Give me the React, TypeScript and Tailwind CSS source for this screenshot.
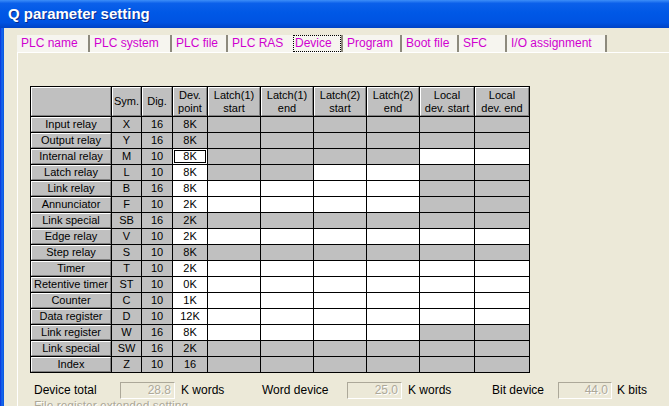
import React from "react";

type Row = {
  name: string;
  sym: string;
  dig: string;
  dev: string;
  devW: boolean;
  l1W: boolean;
  l2W: boolean;
  locW: boolean;
  focus?: boolean;
};

const rows: Row[] = [
  { name: "Input relay", sym: "X", dig: "16", dev: "8K", devW: false, l1W: false, l2W: false, locW: false },
  { name: "Output relay", sym: "Y", dig: "16", dev: "8K", devW: false, l1W: false, l2W: false, locW: false },
  { name: "Internal relay", sym: "M", dig: "10", dev: "8K", devW: true, l1W: false, l2W: false, locW: true, focus: true },
  { name: "Latch relay", sym: "L", dig: "10", dev: "8K", devW: true, l1W: false, l2W: true, locW: false },
  { name: "Link relay", sym: "B", dig: "16", dev: "8K", devW: true, l1W: true, l2W: true, locW: false },
  { name: "Annunciator", sym: "F", dig: "10", dev: "2K", devW: true, l1W: true, l2W: true, locW: false },
  { name: "Link special", sym: "SB", dig: "16", dev: "2K", devW: false, l1W: false, l2W: false, locW: false },
  { name: "Edge relay", sym: "V", dig: "10", dev: "2K", devW: true, l1W: true, l2W: true, locW: true },
  { name: "Step relay", sym: "S", dig: "10", dev: "8K", devW: false, l1W: false, l2W: false, locW: false },
  { name: "Timer", sym: "T", dig: "10", dev: "2K", devW: true, l1W: true, l2W: true, locW: true },
  { name: "Retentive timer", sym: "ST", dig: "10", dev: "0K", devW: true, l1W: true, l2W: true, locW: true },
  { name: "Counter", sym: "C", dig: "10", dev: "1K", devW: true, l1W: true, l2W: true, locW: true },
  { name: "Data register", sym: "D", dig: "10", dev: "12K", devW: true, l1W: true, l2W: true, locW: true },
  { name: "Link register", sym: "W", dig: "16", dev: "8K", devW: true, l1W: true, l2W: true, locW: false },
  { name: "Link special", sym: "SW", dig: "16", dev: "2K", devW: false, l1W: false, l2W: false, locW: false },
  { name: "Index", sym: "Z", dig: "10", dev: "16", devW: false, l1W: false, l2W: false, locW: false },
];

const tabs = [
  { label: "PLC name", w: "w-[73px]", sep: true },
  { label: "PLC system", w: "w-[82px]", sep: true },
  { label: "PLC file", w: "w-[56px]", sep: true },
  { label: "PLC RAS", w: "w-[65px]", sep: false },
  { label: "Device", w: "w-[50px]", sep: true, sel: true },
  { label: "Program", w: "w-[59px]", sep: true },
  { label: "Boot file", w: "w-[57px]", sep: true },
  { label: "SFC", w: "w-[48px]", sep: true },
  { label: "I/O assignment", w: "w-[100px]", sep: true },
];

const headers = [
  ["", ""],
  ["Sym.", ""],
  ["Dig.", ""],
  ["Dev.", "point"],
  ["Latch(1)", "start"],
  ["Latch(1)", "end"],
  ["Latch(2)", "start"],
  ["Latch(2)", "end"],
  ["Local", "dev. start"],
  ["Local", "dev. end"],
];

const raised =
  "bg-[#c0c0c0] border-t border-l border-t-white border-l-white border-b border-r border-b-[#808080] border-r-[#808080]";

function Cell({ white, children, focus }: { white: boolean; children?: React.ReactNode; focus?: boolean }) {
  return (
    <div
      className={
        (white ? "bg-white " : "bg-[#c0c0c0] ") +
        "flex items-center justify-center text-[11px] leading-[15px] text-black " +
        (focus ? "shadow-[inset_0_0_0_1px_#ffffff,inset_0_0_0_2px_#000000]" : "")
      }
    >
      {children}
    </div>
  );
}

function Field({ value, w }: { value: string; w: string }) {
  return (
    <div
      className={
        w +
        " h-[17px] border-t border-l border-t-[#aca899] border-l-[#aca899] border-b border-r border-b-white border-r-white flex items-center justify-end pr-[3px] text-[12px] leading-[15px] text-[#aca899] [text-shadow:1px_1px_0_#ffffff]"
      }
    >
      {value}
    </div>
  );
}

export default function App() {
  return (
    <div className="w-[669px] h-[406px] overflow-hidden bg-[#ece9d8] font-['Liberation_Sans',Arial,sans-serif] text-black">
      <div className="h-[28px] flex items-center bg-[linear-gradient(to_bottom,#3d8ef8_0%,#0b60ea_12%,#0058e6_45%,#0053e2_80%,#0043c6_100%)]">
        <span className="pl-[8px] text-[15px] font-bold text-white leading-[18px] [text-shadow:1px_1px_0_#0a2a8a]">
          Q parameter setting
        </span>
      </div>
      <div className="flex h-[378px]">
        <div className="w-[4px] bg-[linear-gradient(to_right,#0831d9,#166aee,#0855dd)]" />
        <div className="flex-1 pl-[13px] pt-[7px]">
          <div className="flex h-[17px]">
            {tabs.map((t) => (
              <div
                key={t.label}
                className={
                  t.w +
                  " h-[17px] bg-[#f6f5ef] text-[12px] leading-[16px] text-[#d000d0] whitespace-nowrap " +
                  (t.sep ? "border-r-2 border-r-[#8d8a7d] " : "") +
                  (t.sel ? "" : "pl-[4px]")
                }
              >
                {t.sel ? (
                  <span className="block w-[48px] h-[17px] border border-dotted border-black pl-[1px] leading-[14px]">
                    {t.label}
                  </span>
                ) : (
                  t.label
                )}
              </div>
            ))}
          </div>
          <div className="border-t border-l border-white h-[400px] pl-[12px] pt-[33px]">
            <div className="grid w-fit gap-px bg-black border border-black grid-cols-[80px_29px_30px_34px_52px_52px_52px_52px_54px_54px] grid-rows-[29px_repeat(16,15px)]">
              {headers.map((h, i) => (
                <div
                  key={"h" + i}
                  className={raised + " flex flex-col items-center justify-center text-[11px] leading-[13px]"}
                >
                  {h[0] && <span>{h[0]}</span>}
                  {h[1] && <span>{h[1]}</span>}
                </div>
              ))}
              {rows.map((r, i) => (
                <React.Fragment key={"r" + i}>
                  <div className={raised + " flex items-end justify-center text-[11px] leading-[14px]"}>
                    {r.name}
                  </div>
                  <Cell white={false}>{r.sym}</Cell>
                  <Cell white={false}>{r.dig}</Cell>
                  <Cell white={r.devW} focus={r.focus}>
                    {r.dev}
                  </Cell>
                  <Cell white={r.l1W} />
                  <Cell white={r.l1W} />
                  <Cell white={r.l2W} />
                  <Cell white={r.l2W} />
                  <Cell white={r.locW} />
                  <Cell white={r.locW} />
                </React.Fragment>
              ))}
            </div>
            <div className="flex items-center h-[17px] mt-[9px] pl-[4px] text-[12px] leading-[15px] whitespace-nowrap">
              <span className="w-[86px]">Device total</span>
              <Field value="28.8" w="w-[55px]" />
              <span className="ml-[6px] w-[81px]">K words</span>
              <span className="w-[85px]">Word device</span>
              <Field value="25.0" w="w-[55px]" />
              <span className="ml-[6px] w-[84px]">K words</span>
              <span className="w-[66px]">Bit device</span>
              <Field value="44.0" w="w-[54px]" />
              <span className="ml-[5px]">K bits</span>
            </div>
            <div className="pl-[4px] text-[12px] leading-[14px] text-[#aca899] [text-shadow:1px_1px_0_#ffffff]">
              File register extended setting
            </div>
          </div>
        </div>
      </div>
    </div>
  );
}
